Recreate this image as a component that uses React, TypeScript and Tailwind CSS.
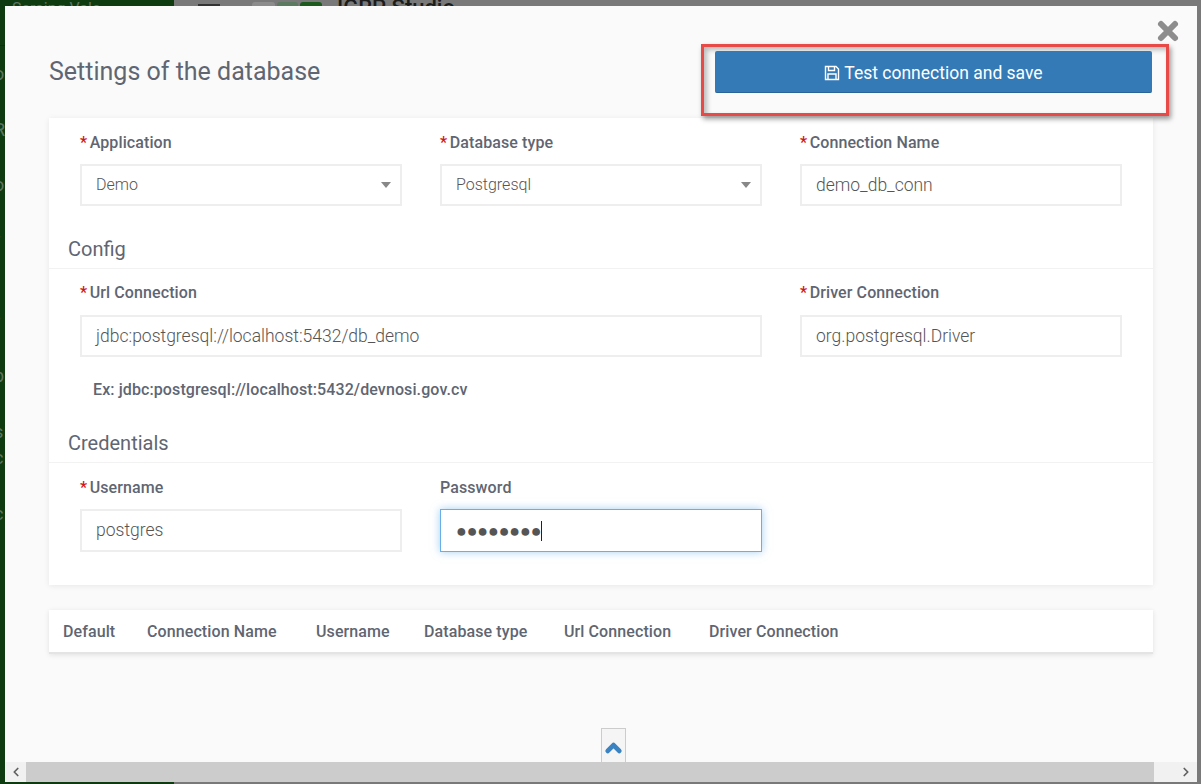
import { ChevronUp, ChevronLeft, ChevronRight } from "lucide-react";

function Label({ text, required }: { text: string; required?: boolean }) {
  return (
    <div className="box-border flex h-[20px] items-center pt-[2px] text-[16px] font-medium leading-[20px] tracking-[0.1px] text-[#5f6672]">
      {required && <span className="mr-[2.5px] text-[#d21313]">*</span>}
      {text}
    </div>
  );
}

function Field({ value, select, className }: { value: string; select?: boolean; className?: string }) {
  return (
    <div className={`flex items-center justify-between border-2 border-[#eeeeee] bg-white pl-[14px] pr-[9px] text-[#555555] ${select ? "text-[16px] font-light" : "text-[17.5px] font-light"} ${className ?? "mt-[12px] h-[42px]"}`}>
      <span>{value}</span>
      {select && <span className="h-0 w-0 border-x-[5px] border-t-[6px] border-x-transparent border-t-[#888888]" />}
    </div>
  );
}

function Section({ title }: { title: string }) {
  return (
    <div className="border-b border-[#f2f2f2] pl-[19px] text-[20px] leading-[24px] text-[#5f6672]">
      <div className="pb-[7px]">{title}</div>
    </div>
  );
}

const fragments: [string, string][] = [
  ["o", "h-[56px]"],
  ["R", "h-[55px]"],
  ["o", "h-[55px]"],
  ["r", "h-[25px]"],
  ["l", "h-[57px]"],
  ["r", "h-[54px]"],
  ["p", "h-[56px]"],
  ["s", "h-[26px]"],
  ["c", "h-[56px]"],
  ["c", "h-[24px]"],
];

export default function App() {
  const columns = [
    ["Default", "w-[84px]"],
    ["Connection Name", "w-[169px]"],
    ["Username", "w-[108px]"],
    ["Database type", "w-[140px]"],
    ["Url Connection", "w-[145px]"],
    ["Driver Connection", ""],
  ];
  return (
    <div className="relative h-[784px] w-[1201px] overflow-hidden bg-[#797979] font-['Roboto',sans-serif]">
      {/* Dimmed page behind the dialog */}
      <div className="flex h-full">
        <div className="w-[174px] bg-[#0e3c10] text-[#5f7562]">
          <div className="h-[46px] border-b border-[#0b3010] pl-[12px] text-[16px] leading-[18px] text-[#5f7562]">Seraing Vale</div>
          <div className="pt-[16px] text-[18px] leading-[24px]">
            {fragments.map(([letter, height], i) => (
              <div key={i} className={`${height} -ml-[6px]`}>{letter}</div>
            ))}
          </div>
        </div>
        <div className="flex h-[6px] flex-1 items-start overflow-hidden pl-[24px]">
          <div className="mt-[4px] h-[2px] w-[22px] bg-[#333333]" />
          <div className="ml-[32px] flex gap-[2px] pt-[2px]">
            <div className="h-[6px] w-[23px] rounded-t-[3px] bg-[#8c8c8c]" />
            <div className="h-[6px] w-[21px] rounded-t-[3px] bg-[#5c7a60]" />
            <div className="h-[6px] w-[22px] rounded-t-[3px] bg-[#1c5a1e]" />
          </div>
          <div className="-mt-[4px] ml-[15px] text-[22px] font-medium leading-[24px] text-[#1c1c1c]">IGRP Studio</div>
        </div>
      </div>

      {/* Dialog */}
      <div className="absolute bottom-[2px] left-[5px] right-[4px] top-[6px] flex flex-col bg-[#fafafa]">
        <div className="relative flex-1 px-[44px]">
          <button className="absolute right-[17px] top-[13px] text-[#8d8d8d]" aria-label="Close">
            <svg width="24" height="24" viewBox="0 0 24 24">
              <path d="M5 5 L19 19 M19 5 L5 19" stroke="currentColor" strokeWidth="6" strokeLinecap="round" />
            </svg>
          </button>

          <div className="flex h-[112px] items-start justify-between">
            <h1 className="mt-[49px] text-[25px] font-normal leading-[34px] text-[#5f6672]">Settings of the database</h1>
            <div className="relative z-10 mr-[-16px] mt-[38px] box-border h-[72px] w-[468px] border-[3px] border-[#e84a48] pl-[11px] pt-[4px] shadow-[2px_3px_5px_rgba(0,0,0,0.4),inset_3px_3px_5px_rgba(0,0,0,0.25)]">
              <button className="flex h-[42px] w-[437px] items-center justify-center gap-[4px] rounded-[2px] border-b border-[#2a6398] bg-[#337ab7] pt-[3px] text-[17.5px] text-white">
                <svg width="16" height="16" viewBox="0 0 16 16" fill="none" stroke="currentColor" strokeWidth="1.4">
                  <path d="M1.5 1.5H12L14.5 4V14.5H1.5Z" />
                  <path d="M4.5 1.5V5.5H10.5V1.5" />
                  <path d="M4 14.5V9H12V14.5" />
                </svg>
                <span>Test connection and save</span>
              </button>
            </div>
          </div>

          {/* Form card */}
          <div className="h-[467px] w-[1104px] bg-white pt-[14px] shadow-[0_1px_6px_rgba(0,0,0,0.08)]">
            <div className="grid grid-cols-[322px_322px_322px] gap-x-[38px] pl-[31px]">
              <div>
                <Label text="Application" required />
                <Field value="Demo" select />
              </div>
              <div>
                <Label text="Database type" required />
                <Field value="Postgresql" select />
              </div>
              <div>
                <Label text="Connection Name" required />
                <Field value="demo_db_conn" />
              </div>
            </div>

            <div className="mt-[31px]">
              <Section title="Config" />
            </div>
            <div className="mt-[13px] grid grid-cols-[682px_322px] gap-x-[38px] pl-[31px]">
              <div>
                <Label text="Url Connection" required />
                <Field value="jdbc:postgresql://localhost:5432/db_demo" className="mt-[13px] h-[42px]" />
              </div>
              <div>
                <Label text="Driver Connection" required />
                <Field value="org.postgresql.Driver" className="mt-[13px] h-[42px]" />
              </div>
            </div>
            <div className="mt-[23px] pl-[44px] text-[16px] font-medium leading-[20px] tracking-[0.1px] text-[#5f6672]">
              Ex: jdbc:postgresql://localhost:5432/devnosi.gov.cv
            </div>

            <div className="mt-[31px]">
              <Section title="Credentials" />
            </div>
            <div className="mt-[14px] grid grid-cols-[322px_322px] gap-x-[38px] pl-[31px]">
              <div>
                <Label text="Username" required />
                <Field value="postgres" className="mt-[12px] h-[43px]" />
              </div>
              <div>
                <Label text="Password" />
                <div className="mt-[12px] flex h-[43px] items-center border border-[#66afe9] bg-white pl-[15px] shadow-[0_0_8px_rgba(102,175,233,0.6)]">
                  <span className="text-[18px] tracking-[-0.2px] text-[#555555]">●●●●●●●●</span>
                  <span className="h-[20px] w-px bg-[#222222]" />
                </div>
              </div>
            </div>
          </div>

          {/* Table header card */}
          <div className="mt-[25px] box-border flex h-[44px] w-[1104px] items-center border-b-2 border-[#e4e4e4] bg-white pl-[14px] pt-[2px] text-[16px] font-medium tracking-[0.1px] text-[#5f6672] shadow-[0_1px_5px_rgba(0,0,0,0.1)]">
            {columns.map(([name, width]) => (
              <div key={name} className={width}>{name}</div>
            ))}
          </div>

          {/* Back-to-top */}
          <div className="absolute bottom-0 left-[596px] flex h-[34px] w-[25px] items-center justify-center border-x border-t border-[#cccccc] bg-[#f5f5f5] pt-[4px] text-[#3a82c0]">
            <ChevronUp size={24} strokeWidth={5} absoluteStrokeWidth />
          </div>
        </div>

        {/* Horizontal scrollbar */}
        <div className="flex h-[20px] items-center bg-[#f1f1f1] text-[#606060]">
          <div className="flex w-[21px] justify-center"><ChevronLeft size={14} strokeWidth={3} /></div>
          <div className="h-full flex-1 bg-[#cccccc]" />
          <div className="flex w-[43px] justify-end pr-[4px]"><ChevronRight size={14} strokeWidth={3} /></div>
        </div>
      </div>
    </div>
  );
}
